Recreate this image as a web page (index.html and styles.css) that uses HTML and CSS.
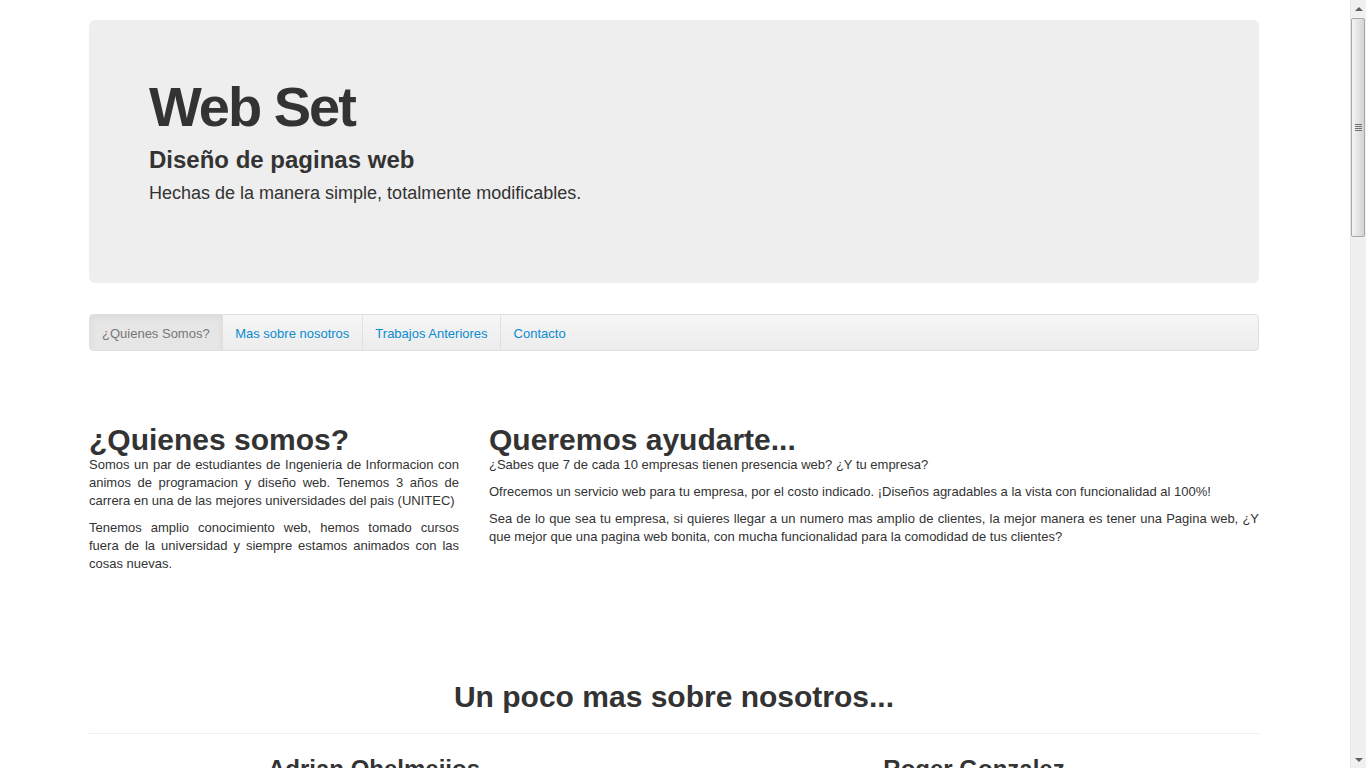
FILE: index.html
```html
<!DOCTYPE html>
<html lang="es">
<head>
<meta charset="utf-8">
<title>Web Set</title>
<link rel="stylesheet" href="styles.css">
</head>
<body>
<div class="container">
  <header class="hero">
    <h1 class="hero-title">Web Set</h1>
    <h3 class="hero-sub">Diseño de paginas web</h3>
    <p class="hero-text">Hechas de la manera simple, totalmente modificables.</p>
  </header>

  <nav class="navbar">
    <ul class="nav">
      <li class="nav-item active"><a href="#quienes">¿Quienes Somos?</a></li>
      <li class="nav-item"><a href="#mas">Mas sobre nosotros</a></li>
      <li class="nav-item"><a href="#trabajos">Trabajos Anteriores</a></li>
      <li class="nav-item last"><a href="#contacto">Contacto</a></li>
    </ul>
  </nav>

  <section class="about" id="quienes">
    <div class="col-left">
      <h2 class="section-title">¿Quienes somos?</h2>
      <p class="text">Somos un par de estudiantes de Ingenieria de Informacion con animos de programacion y diseño web. Tenemos 3 años de carrera en una de las mejores universidades del pais (UNITEC)</p>
      <p class="text">Tenemos amplio conocimiento web, hemos tomado cursos fuera de la universidad y siempre estamos animados con las cosas nuevas.</p>
    </div>
    <div class="col-right">
      <h2 class="section-title">Queremos ayudarte...</h2>
      <p class="text">¿Sabes que 7 de cada 10 empresas tienen presencia web? ¿Y tu empresa?</p>
      <p class="text">Ofrecemos un servicio web para tu empresa, por el costo indicado. ¡Diseños agradables a la vista con funcionalidad al 100%!</p>
      <p class="text">Sea de lo que sea tu empresa, si quieres llegar a un numero mas amplio de clientes, la mejor manera es tener una Pagina web, ¿Y que mejor que una pagina web bonita, con mucha funcionalidad para la comodidad de tus clientes?</p>
    </div>
  </section>

  <section class="team" id="mas">
    <h2 class="team-title">Un poco mas sobre nosotros...</h2>
    <hr class="divider">
    <div class="team-row">
      <div class="member">
        <h3 class="member-name">Adrian Ohelmeijos</h3>
        <p class="text">Estudiante de Ingenieria de Informacion, apasionado por el diseño web y la programacion.</p>
      </div>
      <div class="member">
        <h3 class="member-name">Roger Gonzalez</h3>
        <p class="text">Estudiante de Ingenieria de Informacion, con experiencia en desarrollo de paginas web.</p>
      </div>
    </div>
  </section>
</div>

<div class="scrollbar" aria-hidden="true">
  <div class="sb-btn sb-up"><span class="sb-arrow-up"></span></div>
  <div class="sb-track">
    <div class="sb-thumb">
      <span class="sb-grip"></span>
    </div>
  </div>
  <div class="sb-btn sb-down"><span class="sb-arrow-down"></span></div>
</div>
</body>
</html>
```

FILE: styles.css
```css
html, body {
  margin: 0;
  padding: 0;
}

body {
  padding-right: 18px;
  font-family: "Liberation Sans", Arial, Helvetica, sans-serif;
  font-size: 13px;
  line-height: 18px;
  color: #333333;
  background: #ffffff;
}

.container {
  width: 1170px;
  margin: 0 auto;
  padding-bottom: 300px;
}

/* Hero */
.hero {
  margin-top: 20px;
  padding: 57px 60px 75px;
  background: #eeeeee;
  border-radius: 6px;
}

.hero-title {
  margin: 0;
  font-size: 56px;
  line-height: 60px;
  letter-spacing: -2px;
  font-weight: bold;
  color: #333333;
}

.hero-sub {
  margin: 3px 0 0;
  font-size: 24px;
  line-height: 40px;
  font-weight: bold;
}

.hero-text {
  margin: -2px 0 0;
  font-size: 18px;
  line-height: 30px;
}

/* Navbar */
.navbar {
  margin-top: 31px;
  height: 35px;
  border: 1px solid #e0e0e0;
  border-radius: 4px;
  background: linear-gradient(to bottom, #f6f6f6, #ececec);
  overflow: hidden;
}

.nav {
  display: flex;
  margin: 0;
  padding: 0;
  list-style: none;
  height: 100%;
}

.nav-item {
  border-right: 1px solid #e0e0e0;
}

.nav-item.last {
  border-right: 0;
}

.nav-item a {
  display: block;
  padding: 1px 12.5px 0;
  line-height: 35px;
  color: #0b8bd0;
  text-decoration: none;
}

.nav-item.active a {
  padding: 1px 12px 0;
  background: #e6e6e6;
  color: #777777;
  box-shadow: inset 0 2px 6px rgba(0, 0, 0, 0.06);
}

/* About */
.about {
  display: flex;
  gap: 30px;
  margin-top: 73px;
}

.col-left {
  width: 370px;
}

.col-right {
  width: 770px;
}

.section-title {
  margin: 0;
  font-size: 30px;
  line-height: 32px;
  font-weight: bold;
}

.text {
  margin: 0 0 9px;
  text-align: justify;
}

/* Team */
.team {
  margin-top: 95px;
}

.team-title {
  margin: 0;
  text-align: center;
  font-size: 30px;
  line-height: 40px;
  font-weight: bold;
}

.divider {
  margin: 16px 0 0;
  border: 0;
  border-top: 1px solid #eeeeee;
  border-bottom: 1px solid #ffffff;
}

.team-row {
  display: flex;
  gap: 30px;
  margin-top: 14px;
}

.member {
  width: 570px;
  text-align: center;
}

.member-name {
  margin: 0;
  font-size: 24px;
  line-height: 40px;
  font-weight: bold;
}

/* Fake window scrollbar */
.scrollbar {
  position: fixed;
  top: 0;
  right: 0;
  width: 16px;
  height: 100vh;
  display: flex;
  flex-direction: column;
  background: #f0f0f0;
  border-left: 1px solid #e6e6e6;
  box-sizing: border-box;
}

.sb-btn {
  height: 17px;
  display: flex;
  align-items: center;
  justify-content: center;
  flex: none;
}

.sb-arrow-up {
  width: 0;
  height: 0;
  border-left: 4px solid transparent;
  border-right: 4px solid transparent;
  border-bottom: 4px solid #606060;
}

.sb-arrow-down {
  width: 0;
  height: 0;
  border-left: 4px solid transparent;
  border-right: 4px solid transparent;
  border-top: 4px solid #606060;
}

.sb-track {
  flex: 1;
  padding: 1px 1px 0 0;
}

.sb-thumb {
  height: 219px;
  border: 1px solid #a8a8a8;
  border-radius: 2px;
  background: linear-gradient(to right, #f4f4f4, #e4e4e4 50%, #d4d4d4);
  display: flex;
  align-items: center;
  justify-content: center;
  box-sizing: border-box;
}

.sb-grip {
  width: 7px;
  height: 7px;
  background: repeating-linear-gradient(to bottom, #707070 0, #707070 1px, transparent 1px, transparent 2px);
}
```
